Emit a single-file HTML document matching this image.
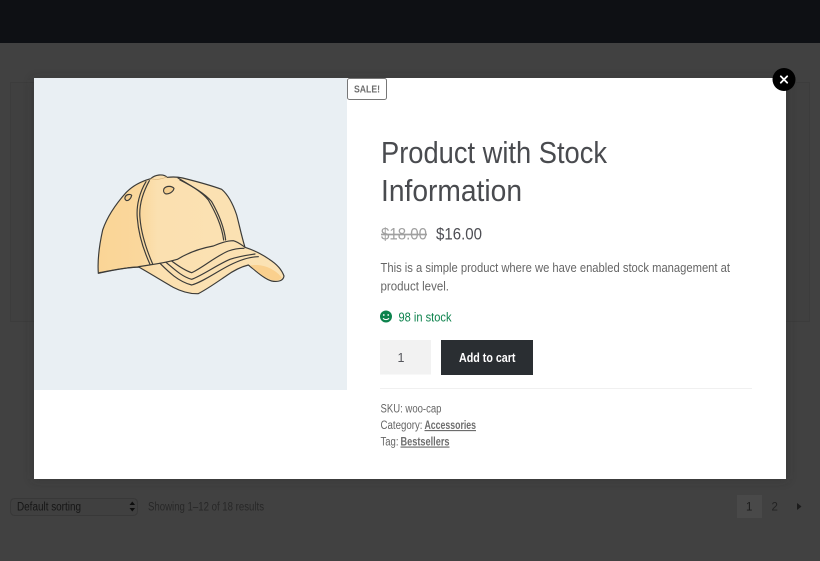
<!DOCTYPE html>
<html><head><meta charset="utf-8"><style>
html,body{margin:0;padding:0;background:#414141;width:820px;height:561px;overflow:hidden}
svg{display:block}
text{font-family:"Liberation Sans",sans-serif}
</style></head><body>
<svg width="820" height="561" viewBox="0 0 820 561" xmlns="http://www.w3.org/2000/svg">
<defs>
<filter id="b" x="-5%" y="-5%" width="110%" height="110%"><feGaussianBlur stdDeviation="0.35"/></filter>
<filter id="s" x="-5%" y="-5%" width="110%" height="110%"><feGaussianBlur stdDeviation="5"/></filter>
<linearGradient id="c1" x1="0" x2="1" y1="0" y2="0"><stop offset="0" stop-color="#fad596"/><stop offset=".22" stop-color="#fad79c"/><stop offset=".32" stop-color="#fbe0b0"/><stop offset="1" stop-color="#fbe2b4"/></linearGradient>
</defs>
<rect width="820" height="561" fill="#414141"/>
<rect width="820" height="43" fill="#0e1014"/>
<rect x="10.5" y="82.5" width="799" height="239" fill="#404040" stroke="#3c3c3c"/>
<rect x="34" y="80" width="752" height="399" fill="#2a2a2a" opacity=".5" filter="url(#s)"/>
<!-- bottom bar -->
<g filter="url(#b)">
<rect x="10.500" y="498.500" width="127" height="17" rx="4" fill="#3f3f3f" stroke="#373737"/>
<text x="17" y="510.500" font-size="11.500" fill="#161616" textLength="64" lengthAdjust="spacingAndGlyphs">Default sorting</text>
<path d="M129.500 505l2.800-3.500 2.800 3.500zM129.500 508l2.800 3.500 2.800-3.500z" fill="#111"/>
<text x="148" y="510.500" font-size="11.500" fill="#272727" textLength="116" lengthAdjust="spacingAndGlyphs">Showing 1–12 of 18 results</text>
<rect x="737" y="495" width="25" height="23" fill="#4a4a4a"/>
<text x="746" y="510.500" font-size="11.500" fill="#1a1a1a">1</text>
<text x="771.500" y="510.500" font-size="11.500" fill="#222">2</text>
<path d="M797 503l4.500 3.500-4.500 3.500z" fill="#1a1a1a"/>
</g>
<!-- modal -->
<rect x="34" y="78" width="752" height="401" fill="#fff"/>
<rect x="34" y="78" width="313" height="312" fill="#e9eff3"/>
<!-- cap -->
<g transform="translate(60 150) scale(.33333)" filter="url(#b)" stroke="#3a3a38" stroke-width="3.500" stroke-linejoin="round" stroke-linecap="round" fill="none">
<path fill="url(#c1)" d="M115 370C112 330 118 285 128 240C140 205 165 165 198 128C215 110 240 95 272 86C285 74 310 70 322 82C340 80 355 81 368 84C400 92 450 105 485 118C505 135 520 165 530 195C538 225 545 260 555 292C580 300 605 312 628 328C650 342 665 358 672 378C670 392 655 397 635 393C615 388 590 365 565 345C545 350 520 362 498 378C470 397 445 415 415 431C390 432 365 425 340 412C310 395 270 370 236 351C195 352 155 362 115 370Z"/>
<path fill="#fad08e" stroke="none" d="M570 347C595 340 640 350 665 382C662 390 650 393 635 390C614 385 592 365 570 347Z"/>
<path d="M118 368C150 362 195 352 236 351"/>
<path d="M236 350C270 345 320 338 352 328C385 308 420 295 460 288C480 280 500 272 520 272C535 276 545 285 555 292"/>
<path d="M258 95C240 125 228 165 232 205C236 260 255 310 270 343"/>
<path d="M268 92C250 125 236 165 240 205C244 255 262 305 278 342"/>
<path d="M354 84C390 105 425 125 445 150C465 185 485 225 491 270"/>
<path d="M360 90C395 108 435 130 455 155C475 190 492 230 497 270"/>
<path stroke-width="1.500" stroke="#c9a060" d="M272 86C288 90 306 88 322 80"/>
<path d="M300 340C325 365 355 395 395 405C430 395 470 365 510 345C540 330 570 320 595 320"/>
<path d="M318 337C340 355 365 380 395 388C430 375 470 345 510 328C540 318 565 315 585 312"/>
<path d="M335 333C355 348 375 362 395 368C425 355 465 320 505 303C525 296 540 295 552 295"/>
<path fill="#f5cf90" d="M312 116C320 106 336 108 342 115C340 126 326 134 316 131C310 128 310 121 312 116Z"/>
<path fill="#f5cf90" d="M196 140C200 132 212 132 215 136C213 146 205 154 198 151C194 148 194 144 196 140Z"/>
</g>
<g filter="url(#b)">
<rect x="347.500" y="78.500" width="39" height="21" rx="2" fill="#fff" stroke="#777"/>
<text x="354" y="92.500" font-size="10.500" font-weight="700" fill="#6d6d6d" textLength="26" lengthAdjust="spacingAndGlyphs">SALE!</text>
<text x="381" y="163" font-size="30.500" fill="#4a4b50" textLength="226" lengthAdjust="spacingAndGlyphs">Product with Stock</text>
<text x="381" y="201" font-size="30.500" fill="#4a4b50" textLength="141" lengthAdjust="spacingAndGlyphs">Information</text>
<text x="381" y="239.500" font-size="17" fill="#a0a0a0" text-decoration="line-through" textLength="46" lengthAdjust="spacingAndGlyphs">$18.00</text>
<text x="436" y="239.500" font-size="17" fill="#4d4e53" textLength="46" lengthAdjust="spacingAndGlyphs">$16.00</text>
<text x="380.500" y="272" font-size="13" fill="#666" textLength="349.500" lengthAdjust="spacingAndGlyphs">This is a simple product where we have enabled stock management at</text>
<text x="380.500" y="290.500" font-size="13" fill="#666" textLength="68.500" lengthAdjust="spacingAndGlyphs">product level.</text>
<circle cx="386" cy="316.500" r="6" fill="#0f834d"/>
<circle cx="383.800" cy="315" r=".9" fill="#fff"/><circle cx="388.200" cy="315" r=".9" fill="#fff"/>
<path d="M383 318.200c1.500 1.900 4.500 1.900 6 0" stroke="#fff" stroke-width="1" fill="none"/>
<text x="398.500" y="321.500" font-size="12.500" fill="#0f834d" textLength="53" lengthAdjust="spacingAndGlyphs">98 in stock</text>
<rect x="380" y="340" width="51" height="34.500" fill="#f2f2f2"/>
<text x="397.500" y="362" font-size="12.500" fill="#55565b">1</text>
<rect x="441" y="340" width="92" height="35" fill="#2c2d33"/>
<text x="459" y="362" font-size="12.500" font-weight="700" fill="#fff" textLength="56.500" lengthAdjust="spacingAndGlyphs">Add to cart</text>
<rect x="380" y="388" width="372" height="1" fill="#f0f0f0"/>
<text x="380.500" y="412.500" font-size="11.500" fill="#666" textLength="61" lengthAdjust="spacingAndGlyphs">SKU: woo-cap</text>
<text x="380.500" y="429" font-size="11.500" fill="#666" textLength="42" lengthAdjust="spacingAndGlyphs">Category:</text>
<text x="424.500" y="429" font-size="11.500" font-weight="700" fill="#6d6d6d" text-decoration="underline" textLength="51.500" lengthAdjust="spacingAndGlyphs">Accessories</text>
<text x="380.500" y="445.500" font-size="11.500" fill="#666" textLength="18" lengthAdjust="spacingAndGlyphs">Tag:</text>
<text x="400.500" y="445.500" font-size="11.500" font-weight="700" fill="#6d6d6d" text-decoration="underline" textLength="49" lengthAdjust="spacingAndGlyphs">Bestsellers</text>
</g>
<!-- close -->
<circle cx="784" cy="79.500" r="11.500" fill="#000"/>
<path d="M780.800 76.300l6.400 6.400M787.200 76.300l-6.400 6.400" stroke="#fff" stroke-width="1.800" stroke-linecap="round"/>
</svg>
</body></html>
